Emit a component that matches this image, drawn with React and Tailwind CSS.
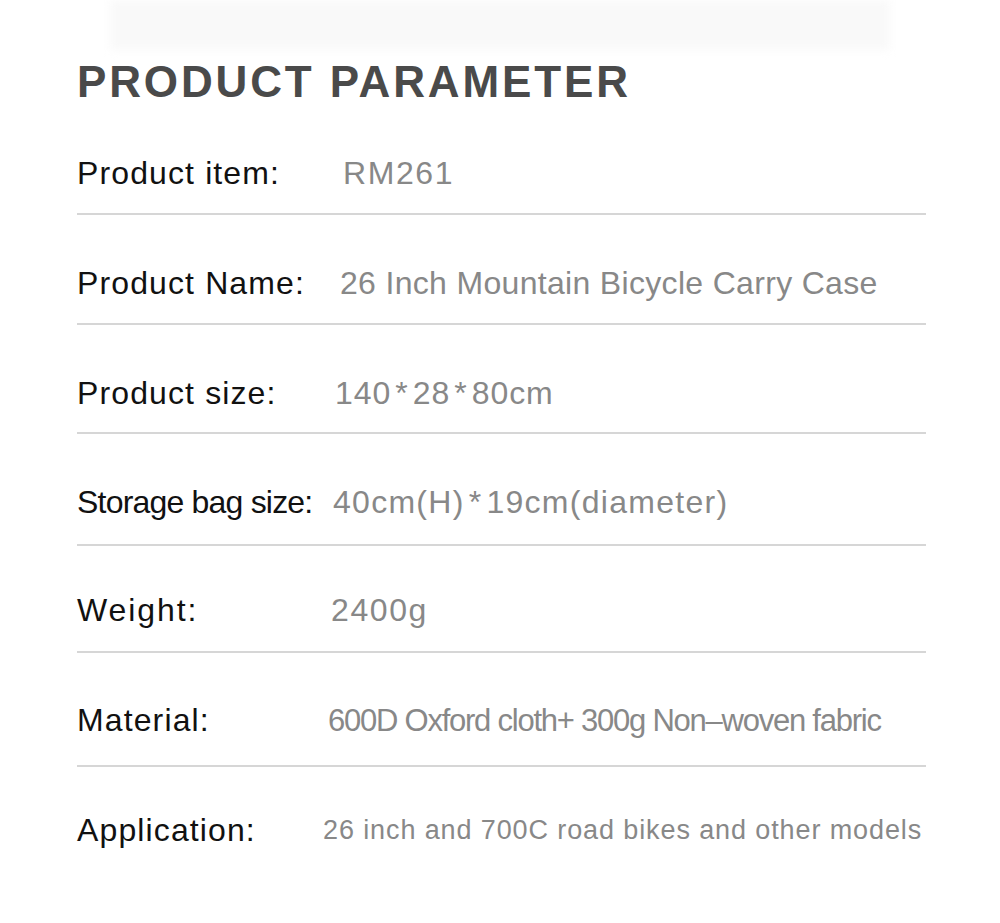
const rows = [
  { label: 'Product item:', value: 'RM261', labelW: 'w-[266px]', rowH: 'h-[110px] pt-[28px]', valueCls: 'text-[32px] tracking-[0.05em]' },
  {
    label: 'Product Name:',
    value: '26 Inch Mountain Bicycle Carry Case',
    labelW: 'w-[263px]',
    rowH: 'h-[110px] pt-[28px]',
    valueCls: 'text-[32px] tracking-[0.01em]',
  },
  { label: 'Product size:', value: '140*28*80cm', labelW: 'w-[258px]', rowH: 'h-[109px] pt-[28px]', valueCls: 'text-[32px] tracking-[0.03em]' },
  {
    label: 'Storage bag size:',
    value: '40cm(H)*19cm(diameter)',
    labelW: 'w-[256px]',
    rowH: 'h-[112px] pt-[26px]',
    labelCls: 'tracking-[-0.025em]',
    valueCls: 'text-[32px] tracking-[0.04em]',
  },
  {
    label: 'Weight:',
    value: '2400g',
    labelW: 'w-[254px]',
    rowH: 'h-[107px] pt-[22px]',
    labelCls: 'tracking-[0.06em]',
    valueCls: 'text-[32px] tracking-[0.05em]',
  },
  {
    label: 'Material:',
    value: '600D Oxford cloth+ 300g Non\u2013woven fabric',
    labelW: 'w-[251px]',
    rowH: 'h-[114px] pt-[22px]',
    valueCls: 'text-[31px] tracking-[-0.04em]',
  },
  {
    label: 'Application:',
    value: '26 inch and 700C road bikes and other models',
    labelW: 'w-[246px]',
    rowH: 'h-[110px] pt-[16px]',
    valueCls: 'text-[27px] tracking-[0.033em]',
    last: true,
  },
]

function Value({ text }) {
  const parts = text.split('*')
  return parts.map((p, i) => (
    <span key={i}>
      {i > 0 && <span className="mx-[4px]">*</span>}
      {p}
    </span>
  ))
}

export default function App() {
  return (
    <div
      className="w-[1000px] h-[923px] bg-white overflow-hidden"
      style={{ fontFamily: '"Liberation Sans", Arial, sans-serif' }}
    >
      <div className="mx-[110px] h-[50px] bg-[#f9f9f9] blur-[4px]" />
      <div className="h-[55px] pl-[77px] pt-[10px]">
        <h1 className="text-[44px] leading-none font-bold text-[#4a4a4a] tracking-[0.065em]">
          PRODUCT PARAMETER
        </h1>
      </div>

      <div className="ml-[77px] mr-[74px]">
        {rows.map((row) => (
          <div
            key={row.label}
            className={`flex items-center ${row.rowH} ${
              row.last ? '' : 'border-b-2 border-[#d6d6d6]'
            }`}
          >
            <span
              className={`${row.labelW} shrink-0 text-[32px] leading-none text-[#111] whitespace-nowrap ${
                row.labelCls || 'tracking-[0.035em]'
              }`}
            >
              {row.label}
            </span>
            <span
              className={`leading-none text-[#888] whitespace-nowrap ${row.valueCls}`}
            >
              <Value text={row.value} />
            </span>
          </div>
        ))}
      </div>
    </div>
  )
}
